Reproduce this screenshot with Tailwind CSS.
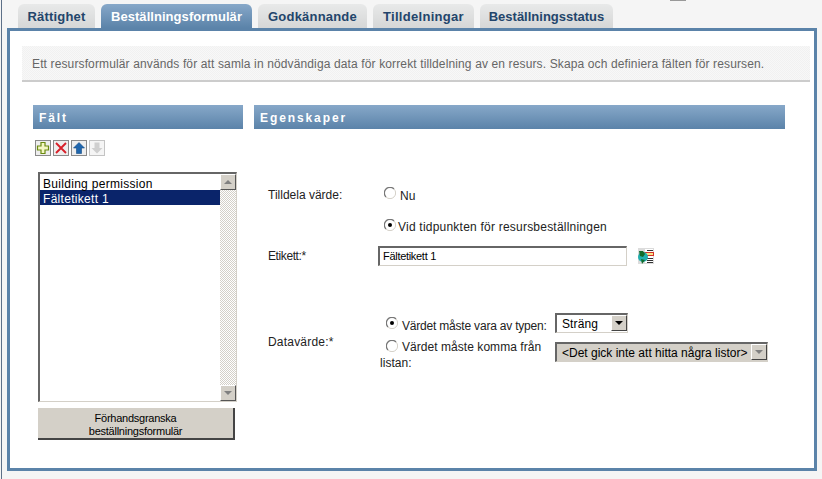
<!DOCTYPE html>
<html><head><meta charset="utf-8"><script src="https://cdn.jsdelivr.net/npm/@tailwindcss/browser@4"></script></head>
<body class="bg-[#f5f5f5] overflow-hidden">
<div class="relative w-[822px] h-[479px] font-['Liberation_Sans',Arial,sans-serif] text-[12px] text-[#222] overflow-hidden">
<div class="absolute left-[670px] top-0 w-[16px] h-px bg-[#999]"></div>
<div class="ml-px h-full border-l border-[#5d7088] pl-[5px] pt-[4px]">
  <div class="flex pl-[11px] gap-[6px] h-[24px] font-bold text-[13px] text-[#23456b] leading-[26px] text-center">
    <div class="w-[77px] rounded-t-[6px] bg-gradient-to-b from-[#e8e9e9] to-[#d6d7d7] tracking-[0.2px]">Rättighet</div>
    <div class="w-[151px] rounded-t-[6px] bg-gradient-to-b from-[#87a8c9] to-[#5b83a9] text-white tracking-[0.05px]">Beställningsformulär</div>
    <div class="w-[109px] rounded-t-[6px] bg-gradient-to-b from-[#e8e9e9] to-[#d6d7d7] tracking-[0.2px]">Godkännande</div>
    <div class="w-[101px] rounded-t-[6px] bg-gradient-to-b from-[#e8e9e9] to-[#d6d7d7] tracking-[0.3px]">Tilldelningar</div>
    <div class="w-[133px] rounded-t-[6px] bg-gradient-to-b from-[#e8e9e9] to-[#d6d7d7]">Beställningsstatus</div>
  </div>
  <div class="w-[810px] h-[443px] border-[3px] border-[#5b83a9] bg-white pt-[15px]">
    <div class="ml-[12px] w-[788px] h-[36px] border-b-2 border-[#cccccc] bg-[repeating-conic-gradient(#f8f8f8_0_25%,#f1f1f1_0_50%)] bg-[length:2px_2px] pl-[10px] leading-[36px] text-[#666] tracking-[0.13px] whitespace-nowrap">Ett resursformulär används för att samla in nödvändiga data för korrekt tilldelning av en resurs. Skapa och definiera fälten för resursen.</div>
    <div class="flex gap-[11px] ml-[23px] mt-[23px]">
      <div class="w-[210px]">
        <div class="h-[24px] bg-gradient-to-b from-[#87a8c9] to-[#5b83a9] pl-[6px] text-white font-bold text-[12px] tracking-[1.9px] leading-[26px]">Fält</div>
        <div class="flex gap-[2px] pl-[2px] mt-[11px]">
          <div class="w-[16px] h-[16px] border border-[#8a8a8a] bg-[#eeeeee]"><svg viewBox="0 0 14 14" class="w-[14px] h-[14px]"><path d="M5 1.500h4v3.500h3.500v4H9v3.500H5V9H1.500V5H5z" fill="#f4f7c4" stroke="#6a8a10" stroke-width="1.200"/></svg></div>
          <div class="w-[16px] h-[16px] border border-[#8a8a8a] bg-[#eeeeee]"><svg viewBox="0 0 14 14" class="w-[14px] h-[14px]"><path d="M2 2l10 10M12 2L2 12" stroke="#d8202a" stroke-width="1.900"/></svg></div>
          <div class="w-[16px] h-[16px] border border-[#8a8a8a] bg-[#eeeeee]"><svg viewBox="0 0 14 14" class="w-[14px] h-[14px]"><path d="M7 1.500L12.500 7H9.500v5.500h-5V7H1.500z" fill="#1f66ad" stroke="#134a85" stroke-width=".6"/></svg></div>
          <div class="w-[16px] h-[16px] border border-[#c4c4c4] bg-[#f5f5f5]"><svg viewBox="0 0 14 14" class="w-[14px] h-[14px]"><path d="M7 12.500L12.500 7H9.500V1.500h-5V7H1.500z" fill="#cfcfcf"/></svg></div>
        </div>
        <div class="ml-[5px] mt-[16px] w-[199px] h-[230px] border-t-2 border-l-2 border-r border-b border-[#666] border-r-[#d4d0c8] border-b-[#d4d0c8] bg-white flex text-black tracking-[0.3px] leading-[19px]">
          <div class="flex-1 pt-px">
            <div class="h-[15px] pl-[3px]">Building permission</div>
            <div class="h-[15px] pl-[3px] bg-[#0a246a] text-white">Fältetikett 1</div>
          </div>
          <div class="w-[16px] flex flex-col bg-[repeating-conic-gradient(#ffffff_0_25%,#d4d0c8_0_50%)] bg-[length:2px_2px]">
            <div class="h-[16px] bg-[#d4d0c8] border border-white border-r-[#555] border-b-[#555] flex items-center justify-center"><div class="w-0 h-0 border-x-[4px] border-x-transparent border-b-[4px] border-b-[#808080]"></div></div>
            <div class="flex-1"></div>
            <div class="h-[16px] bg-[#d4d0c8] border border-white border-r-[#555] border-b-[#555] flex items-center justify-center"><div class="w-0 h-0 border-x-[4px] border-x-transparent border-t-[4px] border-t-[#808080]"></div></div>
          </div>
        </div>
        <div class="ml-[5px] mt-[6px] w-[197px] h-[32px] bg-[#d4d0c8] border-r-2 border-b-2 border-[#444] pt-[4px] text-center text-black text-[11px] tracking-[-0.25px] leading-[13px]">Förhandsgranska<br>beställningsformulär</div>
      </div>
      <div class="w-[531px]">
        <div class="h-[24px] bg-gradient-to-b from-[#87a8c9] to-[#5b83a9] pl-[6px] text-white font-bold text-[12px] tracking-[1.9px] leading-[26px]">Egenskaper</div>
        <div class="flex h-[16px] mt-[58px] pl-[14px] items-center">
          <div class="w-[116px]">Tilldela värde:</div>
          <div class="flex items-center gap-[4px]">
            <svg class="w-[12px] h-[12px] -mt-[4px]" viewBox="0 0 12 12"><circle cx="6" cy="6" r="5.500" fill="#fff"/><path d="M2 10A5.500 5.500 0 0 1 10 2" fill="none" stroke="#777" stroke-width="1.300"/><path d="M10 2A5.500 5.500 0 0 1 2 10" fill="none" stroke="#d4d0c8" stroke-width="1"/></svg>
            <span class="mt-[2px] tracking-[0.1px]">Nu</span>
          </div>
        </div>
        <div class="flex h-[16px] mt-[15px] pl-[130px] items-center gap-[2px]">
          <svg class="w-[12px] h-[12px] -mt-[3px]" viewBox="0 0 12 12"><circle cx="6" cy="6" r="5.500" fill="#fff"/><path d="M2 10A5.500 5.500 0 0 1 10 2" fill="none" stroke="#777" stroke-width="1.300"/><path d="M10 2A5.500 5.500 0 0 1 2 10" fill="none" stroke="#d4d0c8" stroke-width="1"/><circle cx="6" cy="6" r="2" fill="#000"/></svg>
          <span class="mt-[1px] tracking-[0.22px]">Vid tidpunkten för resursbeställningen</span>
        </div>
        <div class="flex h-[20px] mt-[12px] pl-[14px] items-center">
          <div class="w-[110px] tracking-[-0.4px]">Etikett:*</div>
          <div class="w-[249px] h-[20px] border-t-2 border-l-2 border-r border-b border-[#666] border-r-[#d4d0c8] border-b-[#d4d0c8] bg-white pl-[3px] text-[11px] tracking-[-0.3px] text-black leading-[17px]">Fältetikett 1</div>
          <svg class="w-[16px] h-[16px] ml-[11px]" viewBox="0 0 16 16"><rect x="0" y="0" width="16" height="16" fill="#dcdcdc"/><rect x="7" y="1" width="8" height="14" fill="#fff"/><path d="M9 2.500h6M9 10.500h6M9 12.500h6M9 14.500h6" stroke="#333"/><rect x="6.500" y="4.500" width="9" height="3" fill="#f6e58a" stroke="#d6332a" stroke-width="1"/><circle cx="5" cy="9" r="5" fill="#22b0b0"/><path d="M1 3h4l2 3-2 3-3-1zM3 11l4 1-3 4z" fill="#136b2a"/></svg>
        </div>
        <div class="flex mt-[47px] pl-[14px]">
          <div class="w-[112px] pt-[20px] tracking-[0.2px]">Datavärde:*</div>
          <div class="w-[175px]">
            <div class="h-[26px] pl-[6px] pt-[6px] flex items-start gap-[3px]">
              <svg class="w-[12px] h-[12px] mt-[-2px] shrink-0" viewBox="0 0 12 12"><circle cx="6" cy="6" r="5.500" fill="#fff"/><path d="M2 10A5.500 5.500 0 0 1 10 2" fill="none" stroke="#777" stroke-width="1.300"/><path d="M10 2A5.500 5.500 0 0 1 2 10" fill="none" stroke="#d4d0c8" stroke-width="1"/><circle cx="6" cy="6" r="2" fill="#000"/></svg>
              <span class="leading-[14px] whitespace-nowrap tracking-[-0.2px] ml-px">Värdet måste vara av typen:</span>
            </div>
            <div class="leading-[16px] tracking-[0.05px]">
              <svg class="inline-block w-[12px] h-[12px] ml-[6px] mr-[4px] -mt-[4px]" viewBox="0 0 12 12"><circle cx="6" cy="6" r="5.500" fill="#fff"/><path d="M2 10A5.500 5.500 0 0 1 10 2" fill="none" stroke="#777" stroke-width="1.300"/><path d="M10 2A5.500 5.500 0 0 1 2 10" fill="none" stroke="#d4d0c8" stroke-width="1"/></svg>Värdet måste komma från<br>listan:
            </div>
          </div>
          <div class="flex flex-col gap-[9px] text-black text-[12px]">
            <div class="w-[73px] h-[20px] border-t-2 border-l-2 border-r border-b border-[#666] border-r-[#d4d0c8] border-b-[#d4d0c8] bg-white flex justify-between tracking-[0.1px]">
              <span class="pl-[5px] leading-[19px]">Sträng</span>
              <div class="w-[16px] h-[16px] bg-[#d4d0c8] border border-white border-r-[#444] border-b-[#444] flex items-center justify-center"><div class="w-0 h-0 border-x-[4px] border-x-transparent border-t-[4px] border-t-black"></div></div>
            </div>
            <div class="w-[213px] h-[20px] border-t-2 border-l-2 border-r border-b border-[#666] border-r-[#d4d0c8] border-b-[#d4d0c8] bg-[#d4d0c8] flex justify-between">
              <span class="pl-[5px] leading-[18px] whitespace-nowrap">&lt;Det gick inte att hitta några listor&gt;</span>
              <div class="w-[16px] h-[16px] bg-[#d4d0c8] border border-white border-r-[#444] border-b-[#444] flex items-center justify-center"><div class="w-0 h-0 border-x-[4px] border-x-transparent border-t-[4px] border-t-[#808080]"></div></div>
            </div>
          </div>
        </div>
      </div>
    </div>
  </div>
</div>
</div>
</body></html>
